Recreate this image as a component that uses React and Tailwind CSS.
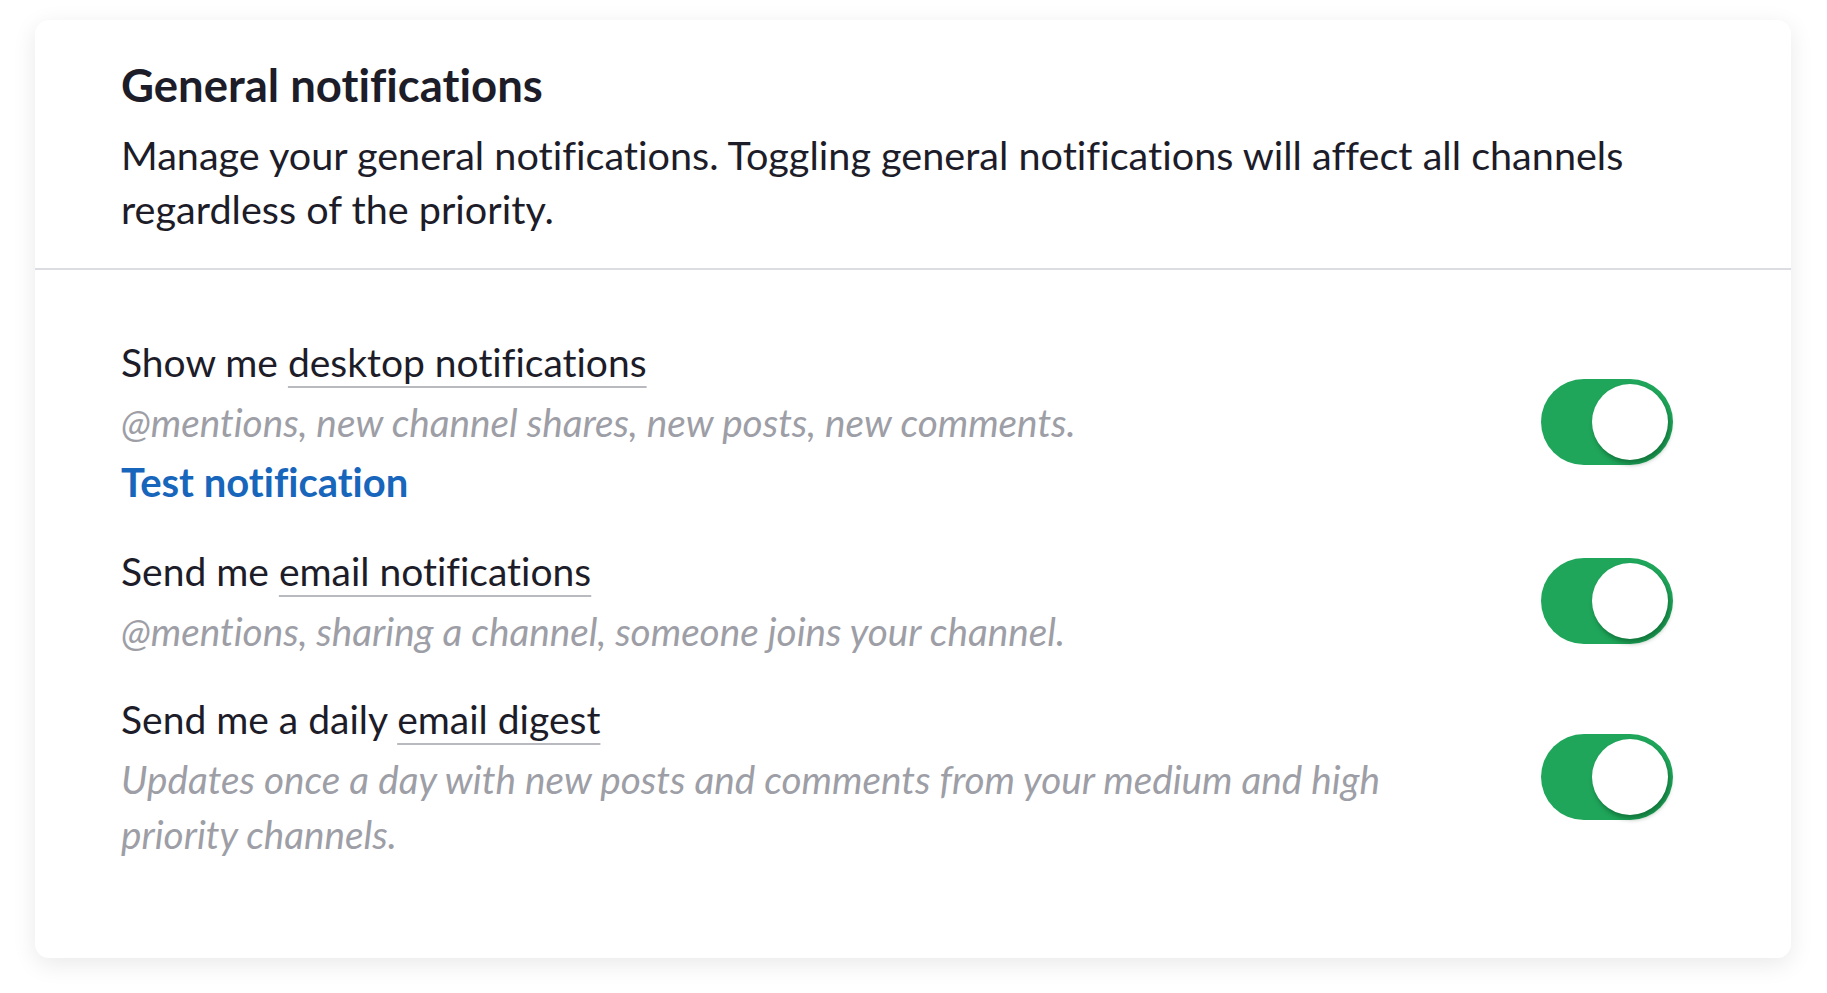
export default function App() {
  const rows = [
    {
      lead: "Show me ",
      link: "desktop notifications",
      sub: "@mentions, new channel shares, new posts, new comments.",
      test: true,
    },
    {
      lead: "Send me ",
      link: "email notifications",
      sub: "@mentions, sharing a channel, someone joins your channel.",
    },
    {
      lead: "Send me a daily ",
      link: "email digest",
      sub: "Updates once a day with new posts and comments from your medium and high priority channels.",
    },
  ];

  return (
    <div className="min-h-screen bg-white pl-[35px] pr-[36px] pt-[20px] font-['Lato',sans-serif] text-[#1d1c29] [font-variant-ligatures:none]">
      <div className="h-[938px] rounded-[14px] bg-white shadow-[0_6px_24px_rgba(0,0,0,0.09)]">
        <div className="border-b-2 border-[#dcdde2] px-[86px] pt-[37px] pb-[32px]">
          <h1 className="text-[45.5px] font-bold leading-[56px]">General notifications</h1>
          <p className="mt-[15px] text-[39.6px] leading-[54px]">
            Manage your general notifications. Toggling general notifications will affect all channels regardless of the
            priority.
          </p>
        </div>

        <div className="flex flex-col gap-[34px] pl-[86px] pr-[118px] pt-[65px]">
          {rows.map((r) => (
            <div key={r.link} className="flex items-center gap-[80px]">
              <div className="flex-1 text-[39px] leading-[55px]">
                <div>
                  {r.lead}
                  <span className="underline decoration-[#b9bac0] decoration-2 underline-offset-[9px]">{r.link}</span>
                </div>
                <p className="mt-[5px] text-[38.7px] italic leading-[54.5px] text-[#9d9ea6]">{r.sub}</p>
                {r.test && <div className="mt-[5px] text-[40px] font-bold text-[#1766bb]">Test notification</div>}
              </div>
              <div className="relative h-[86px] w-[132px] shrink-0 rounded-full bg-[#1fa65b]">
                <div className="absolute right-[5px] top-[5px] h-[76px] w-[76px] rounded-full bg-white shadow-[2px_4px_5px_rgba(0,60,20,0.45)]" />
              </div>
            </div>
          ))}
        </div>
      </div>
    </div>
  );
}
